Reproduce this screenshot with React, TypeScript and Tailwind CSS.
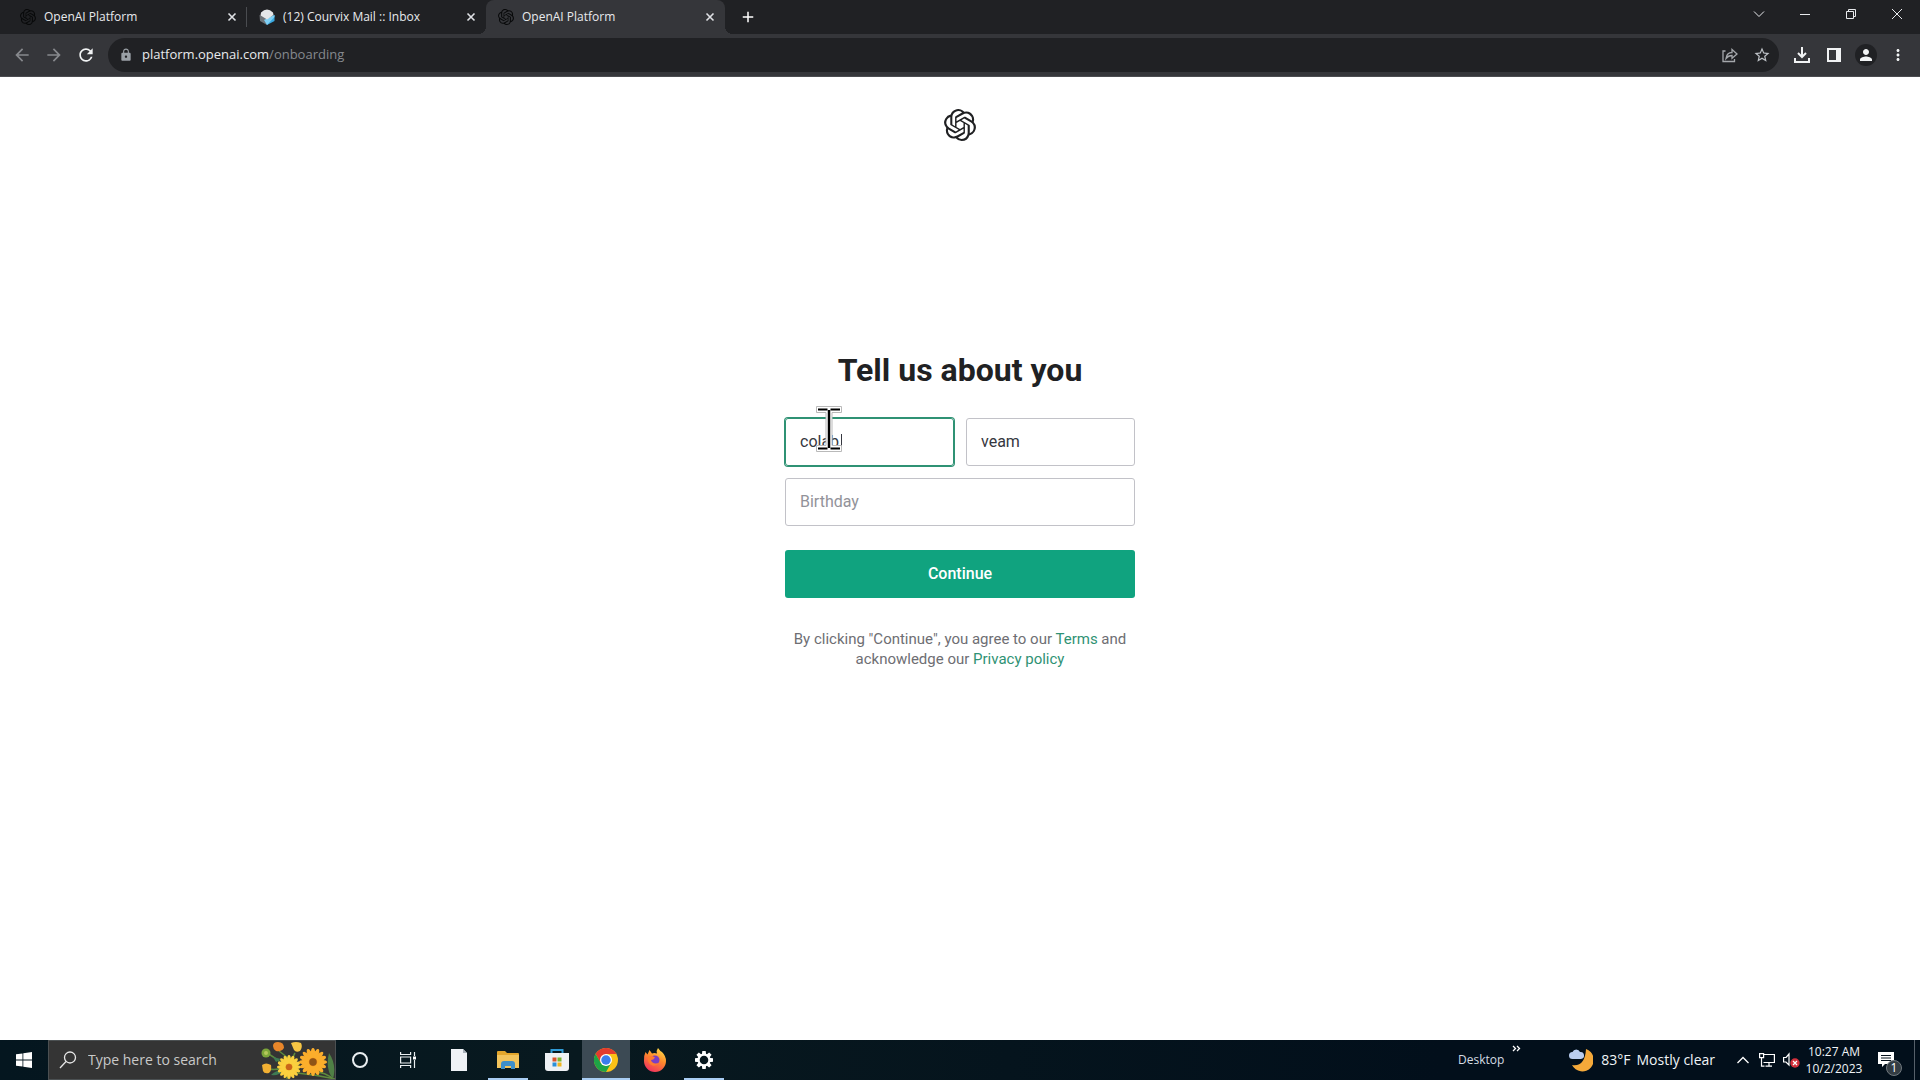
import React from "react";
import { SiOpenai } from "react-icons/si";
import { MdArrowBack, MdArrowForward, MdRefresh, MdLock, MdStarBorder, MdMoreVert, MdPerson, MdAdd } from "react-icons/md";

const ui = "font-['Open_Sans','Noto_Sans',sans-serif]";

function CloseGlyph() {
  return (
    <svg viewBox="0 0 16 16" className="size-4" fill="none" stroke="currentColor" strokeWidth="1.6">
      <path d="M4.5 4.5l7 7M11.500 4.500l-7 7" />
    </svg>
  );
}

function MailIcon() {
  return (
    <svg viewBox="0 0 16 16" className="size-4 shrink-0">
      <path d="M0.500 6L8 10v6L1 12z" fill="#6d7378" />
      <path d="M8 10l7.500-4v6L8 16z" fill="#3aa9e0" />
      <path d="M8 16l-3-5 3-1.500L15.500 6v2z" fill="#7fd0f5" />
      <path d="M2 3.500Q8-2.500 14 3.500L14.500 6 8 10.500 1.500 6.500z" fill="#e4e6e8" />
    </svg>
  );
}

type TabProps = { title: string; icon: React.ReactNode; active?: boolean; divider?: boolean };

function Tab({ title, icon, active, divider }: TabProps) {
  return (
    <div
      className={
        active
          ? "relative flex h-full w-[239px] items-center gap-2 rounded-t-lg bg-[#35363a] pr-[7px] pl-3 before:absolute before:right-full before:bottom-0 before:size-2 before:bg-[radial-gradient(circle_at_top_left,transparent_8px,#35363a_8px)] after:absolute after:bottom-0 after:left-full after:size-2 after:bg-[radial-gradient(circle_at_top_right,transparent_8px,#35363a_8px)]"
          : "relative flex h-full w-[239px] items-center gap-2 pr-[7px] pl-3"
      }
    >
      {icon}
      <button className="min-w-0 flex-1 truncate text-left text-xs text-[#e8eaed]">{title}</button>
      <button aria-label="Close tab" className="text-[#dfe1e5]">
        <CloseGlyph />
      </button>
      {divider && <span className="absolute top-[7px] right-0 h-5 w-px bg-[#4a4c50]" />}
    </div>
  );
}

function WindowButton({ label, children }: { label: string; children: React.ReactNode }) {
  return (
    <button aria-label={label} className="grid h-7 w-[46px] place-items-center">
      <svg viewBox="0 0 12 12" className="size-3" fill="none" stroke="#e8eaed" strokeWidth="1">
        {children}
      </svg>
    </button>
  );
}

function TabStrip() {
  const dark = <SiOpenai className="size-4 shrink-0 text-[#08090a]" />;
  return (
    <header className="flex h-[34px] shrink-0 bg-[#202124] pl-2">
      <Tab title="OpenAI Platform" icon={dark} divider />
      <Tab title="(12) Courvix Mail :: Inbox" icon={<MailIcon />} />
      <Tab title="OpenAI Platform" icon={dark} active />
      <button aria-label="New tab" className="ml-3 grid size-[22px] self-center place-items-center text-white">
        <MdAdd className="size-[18px]" />
      </button>
      <div className="ml-auto flex">
        <WindowButton label="Search tabs">
          <path d="M1 3.500l5 5 5-5" />
        </WindowButton>
        <WindowButton label="Minimize">
          <path d="M1 6.500h10" />
        </WindowButton>
        <WindowButton label="Restore">
          <path d="M1.500 3.500h7v7h-7zM3.500 3.500v-2h7v7h-2" />
        </WindowButton>
        <WindowButton label="Close">
          <path d="M1 1l10 10M11 1L1 11" />
        </WindowButton>
      </div>
    </header>
  );
}

function ToolButton({ label, children, className }: { label: string; children: React.ReactNode; className?: string }) {
  return (
    <button aria-label={label} className={"grid size-8 place-items-center " + (className ?? "")}>
      {children}
    </button>
  );
}

function Toolbar() {
  return (
    <nav className="flex h-[43px] shrink-0 items-center border-b border-[#4b4c50] bg-[#35363a] pr-1.5 pl-1.5">
      <ToolButton label="Back" className="text-[#87898d]">
        <MdArrowBack className="size-5" />
      </ToolButton>
      <ToolButton label="Forward" className="text-[#87898d]">
        <MdArrowForward className="size-5" />
      </ToolButton>
      <ToolButton label="Reload" className="text-[#f1f3f4]">
        <MdRefresh className="size-5" />
      </ToolButton>
      <div className="mr-[7px] ml-1.5 flex h-[34px] flex-1 items-center rounded-full bg-[#202124] pr-px pl-[11px]">
        <MdLock className="size-3.5 text-[#9aa0a6]" />
        <a href="#address" className="ml-[9px] flex-1 text-[13px] text-[#e8eaed]">
          platform.openai.com<span className="text-[#85898e]">/onboarding</span>
        </a>
        <ToolButton label="Share" className="text-[#a4a7ab]">
          <svg viewBox="0 0 16 16" className="size-4" fill="none" stroke="currentColor" strokeWidth="1.300">
            <path d="M3.500 4H1v10.500h11.500V12" />
            <path d="M4 11.500C4.500 7.500 7 5.500 10 5.500V2.500l5 4.500-5 4.300V8.500C7.500 8.500 5.500 9.500 4 11.500z" />
          </svg>
        </ToolButton>
        <ToolButton label="Bookmark" className="text-[#bdc1c6]">
          <MdStarBorder className="size-[18px]" />
        </ToolButton>
      </div>
      <ToolButton label="Downloads">
        <svg viewBox="0 0 16 16" className="size-4" fill="none" stroke="#f1f3f4" strokeWidth="2">
          <path d="M8 0v9.500M4 6l4 4 4-4M1 11v4h14v-4" />
        </svg>
      </ToolButton>
      <ToolButton label="Side panel">
        <svg viewBox="0 0 14 14" className="size-3.5">
          <path fillRule="evenodd" d="M0 0h14v14H0zM2 2v10h7V2z" fill="#f1f3f4" />
        </svg>
      </ToolButton>
      <ToolButton label="Profile">
        <span className="grid size-[22px] place-items-center rounded-full bg-[#202124] text-[#f1f3f4]">
          <MdPerson className="size-[18px]" />
        </span>
      </ToolButton>
      <ToolButton label="Menu" className="text-[#f1f3f4]">
        <MdMoreVert className="size-[18px]" />
      </ToolButton>
    </nav>
  );
}

function TextCursor() {
  return (
    <svg viewBox="0 0 26 46" className="pointer-events-none absolute -top-3 left-[31px] h-[46px] w-[26px]">
      <path d="M.5.500h25v6H16v33h9.500v6H.5v-6H10v-33H.5z" fill="#fff" stroke="#b9b9b9" />
      <path d="M2 3.500h9.500M14.500 3.500H24M2 42.500h9.500M14.500 42.500H24" stroke="#000" strokeWidth="2" />
      <path d="M13 4v38" stroke="#000" strokeWidth="2.500" />
    </svg>
  );
}

function Onboarding() {
  return (
    <main className="flex flex-1 flex-col items-center bg-white font-[Roboto,sans-serif]">
      <SiOpenai className="mt-8 size-8 text-[#202123]" aria-label="OpenAI" />
      <form className="mt-[209px] flex w-[350px] flex-col" onSubmit={(e) => e.preventDefault()}>
        <h1 className="text-center text-[32px] leading-10 font-bold whitespace-nowrap text-[#202123]">Tell us about you</h1>
        <div className="mt-7 grid grid-cols-2 gap-3">
          <div className="relative">
            <input
              aria-label="First name"
              defaultValue="colab"
              className="h-12 w-full rounded-[3px] border border-[#2f9274] px-3.5 pb-0.5 text-base text-[#353740] ring-1 ring-[#2f9274] outline-none"
            />
            <span className="absolute top-4 left-14 h-4 w-px bg-[#353740]" />
            <TextCursor />
          </div>
          <input
            aria-label="Last name"
            defaultValue="veam"
            className="h-12 w-full rounded-[3px] border border-[#c2c2c8] px-3.5 pb-0.5 text-base text-[#353740] outline-none"
          />
        </div>
        <input
          aria-label="Birthday"
          placeholder="Birthday"
          className="mt-3 h-12 rounded-[3px] border border-[#c2c2c8] px-3.5 pb-0.5 text-base outline-none placeholder:text-[#929299]"
        />
        <button className="mt-6 h-12 rounded-[3px] bg-[#10a37f] text-base font-medium text-white">Continue</button>
        <p className="mt-[31px] text-center text-[15px] leading-5 text-[#6e6e73]">
          By clicking "Continue", you agree to our <a href="#terms" className="text-[#2f9274]">Terms</a> and
          <br />
          acknowledge our <a href="#privacy" className="text-[#2f9274]">Privacy policy</a>
        </p>
      </form>
    </main>
  );
}

type DaisyProps = { x: number; y: number; r: number; petal: string; shade: string; heart: string };

function Daisy({ x, y, r, petal, shade, heart }: DaisyProps) {
  return (
    <g transform={`translate(${x} ${y})`}>
      <circle r={r * 0.8} fill={shade} />
      {Array.from({ length: 16 }, (_, i) => (
        <ellipse key={i} cy={-r * 0.64} rx={r * 0.15} ry={r * 0.36} fill={petal} transform={`rotate(${i * 22.500})`} />
      ))}
      <circle r={r * 0.26} fill={heart} />
    </g>
  );
}

function Flowers() {
  return (
    <svg viewBox="0 0 74 38" className="h-[38px] w-[74px]" fill="none">
      <path d="M6 12Q16 18 20 22M18 10Q26 16 30 20M34 12Q28 22 26 38M8 28Q18 30 28 24M36 32Q56 34 74 38M52 30Q66 32 72 38" stroke="#5e8a3c" strokeWidth="1.500" />
      <path d="M68 12Q76 24 72 38Q64 28 68 12z" fill="#4f7f45" />
      <path d="M12 16l8 2-5 3zM10 34q6-6 12-4-4 5-12 4z" fill="#3e7a52" />
      <circle cx="5" cy="12" r="4.500" fill="#7da63a" />
      <circle cx="5" cy="12" r="2" fill="#b5c85a" />
      <path d="M12 5q0-4 5-4 6 0 6 6-3 4-8 3-3-2-3-5z" fill="#e8862a" />
      <path d="M30 2q5-2 10 0 2 4-1 8-4 2-6-1z" fill="#f6c544" />
      <path d="M1 24q4-3 9 0 1 5-2 8-5 1-6-2z" fill="#f2b033" />
      <Daisy x={28} y={26} r={12} petal="#fad03f" shade="#e89a1c" heart="#c9651a" />
      <Daisy x={52} y={21} r={14} petal="#fbae2c" shade="#e27d14" heart="#8f5416" />
    </svg>
  );
}

function Cell({ label, line, active, children }: { label: string; line?: boolean; active?: boolean; children: React.ReactNode }) {
  return (
    <button aria-label={label} className={"relative grid h-10 w-12 place-items-center " + (active ? "bg-[#3c4a54]" : "")}>
      {children}
      {line && <span className={"absolute bottom-0 h-0.5 bg-[#a9cdf3] " + (active ? "inset-x-0" : "inset-x-1")} />}
    </button>
  );
}

function Taskbar() {
  return (
    <footer className={"flex h-10 shrink-0 items-center bg-[linear-gradient(90deg,#04161f,#08191f_30%,#020f1b_75%)] text-white " + ui}>
      <Cell label="Start">
        <svg viewBox="0 0 16 16" className="size-4" fill="#fff">
          <path d="M0 2.300l6.500-.9v6.200H0zM7.300 1.300L16 0v7.600H7.300zM0 8.400h6.500v6.200L0 13.700zM7.300 8.400H16V16l-8.700-1.200z" />
        </svg>
      </Cell>
      <label className="flex h-10 w-[288px] items-center border border-[#4b5052] bg-[#343434] pl-2.5">
        <svg viewBox="0 0 18 18" className="size-[18px]" fill="none" stroke="#e6e6e6" strokeWidth="1.300">
          <circle cx="11" cy="6.500" r="5.500" />
          <path d="M7 10.500L1 17" />
        </svg>
        <input aria-label="Search" placeholder="Type here to search" className="ml-[11px] w-0 flex-1 text-sm outline-none placeholder:text-[#c9c9c9]" />
        <Flowers />
      </label>
      <Cell label="Cortana">
        <span className="size-4 rounded-full border-2 border-[#e9eef0]" />
      </Cell>
      <Cell label="Task view">
        <svg viewBox="0 0 16 16" className="size-4" fill="none" stroke="#e9eef0" strokeWidth="1.200">
          <path d="M.6 0v2.500h10V0M.6 16v-2.500h10V16M.6 5h10v6H.6zM14.500 0v4M14.500 8v8" />
          <path d="M13 4.500h3v3h-3z" fill="#fff" stroke="none" />
        </svg>
      </Cell>
      <div className="ml-[3px] flex gap-px">
        <Cell label="Document">
          <svg viewBox="0 0 16 22" className="h-[22px] w-4">
            <path d="M0 0h12l4 4v18H0z" fill="#eef2f6" />
            <path d="M12 0v4h4z" fill="#a7b1ba" />
          </svg>
        </Cell>
        <Cell label="File Explorer" line>
          <svg viewBox="0 0 22 18" className="h-[18px] w-[22px]">
            <path d="M0 1q0-1 1-1h7l2 2h11q1 0 1 1v14H0z" fill="#e3a62c" />
            <path d="M0 4h22v13H0z" fill="#f3c45c" />
            <path d="M4 18v-5q0-3 3-3h8q3 0 3 3v5h-4v-3H8v3z" fill="#3f8fc9" />
          </svg>
        </Cell>
        <Cell label="Microsoft Store">
          <svg viewBox="0 0 24 24" className="size-6">
            <path d="M6.500 6V2h11v4" fill="none" stroke="#2f9bd6" strokeWidth="2" />
            <path d="M0 5h24v15q0 3-3 3H3q-3 0-3-3z" fill="#eef1f4" />
            <path d="M7.500 9.500h4v4h-4z" fill="#d9532c" />
            <path d="M12.500 9.500h4v4h-4z" fill="#7bb32e" />
            <path d="M7.500 14.500h4v4h-4z" fill="#2b8fd8" />
            <path d="M12.500 14.500h4v4h-4z" fill="#efb41f" />
          </svg>
        </Cell>
        <Cell label="Chrome" line active>
          <svg viewBox="0 0 48 48" className="size-6">
            <circle cx="24" cy="24" r="24" fill="#fbc116" />
            <path d="M3.200 12A24 24 0 0 1 44.800 12H24L13.600 30z" fill="#e33b2e" />
            <path d="M3.200 12A24 24 0 0 0 24 48L34.400 30 24 36 13.600 30z" fill="#1ea446" />
            <circle cx="24" cy="24" r="12" fill="#fff" />
            <circle cx="24" cy="24" r="9.500" fill="#3b7ded" />
          </svg>
        </Cell>
        <Cell label="Firefox">
          <svg viewBox="0 0 24 24" className="size-6">
            <defs>
              <linearGradient id="fox" x1=".8" y1="0" x2=".3" y2="1">
                <stop offset="0" stopColor="#ffe04a" />
                <stop offset=".45" stopColor="#ff8a2b" />
                <stop offset="1" stopColor="#f0305f" />
              </linearGradient>
            </defs>
            <path d="M2.500 4l2 2.500L6.500 2l2.500 3.500q2-1 5 0Q13 2.500 15 0q2 3 4 4 4 4 4 9a11 11 0 0 1-22 0Q.5 8 2.500 4z" fill="url(#fox)" />
            <circle cx="12" cy="12" r="4.500" fill="#7a3fc4" />
            <path d="M5 9q3-2 7 .5-1.500 2.500-4 2.500 1 4.500 8 3-4 4.500-8.500 1.500-3.500-3-2.500-7.500z" fill="#ff7a30" />
          </svg>
        </Cell>
        <Cell label="Settings" line>
          <svg viewBox="-10 -10 20 20" className="size-5">
            {Array.from({ length: 8 }, (_, i) => (
              <path key={i} d="M-1.700-9h3.400l.5 4h-4.400z" fill="#fff" transform={`rotate(${i * 45})`} />
            ))}
            <circle r="5.400" fill="none" stroke="#fff" strokeWidth="2.200" />
          </svg>
        </Cell>
      </div>
      <div className="ml-auto flex h-full items-center">
        <button className="text-xs text-[#d5dde3]">Desktop</button>
        <button aria-label="More" className="ml-2 self-start pt-1">
          <svg viewBox="0 0 9 9" className="size-[9px]" fill="none" stroke="#fff" strokeWidth="1.300">
            <path d="M1 2l2.500 2.500L1 7M5 2l2.500 2.500L5 7" />
          </svg>
        </button>
        <button className="ml-12 flex items-center text-sm text-[#f0f4f7]">
          <svg viewBox="0 0 24 24" className="size-6">
            <path d="M17 1a11.500 11.500 0 1 1-14 16Q16 19 17 1z" fill="#f5a93a" />
            <path d="M3.500 11a3.500 3.500 0 0 1 0-7A4 4 0 0 1 11 4a3.500 3.500 0 0 1 1 7z" fill="#b9cdf0" />
          </svg>
          <span className="ml-2">83°F</span>
          <span className="ml-1.5">Mostly clear</span>
        </button>
        <button aria-label="Show hidden icons" className="ml-[22px]">
          <svg viewBox="0 0 12 12" className="size-3" fill="none" stroke="#fff" strokeWidth="1.300">
            <path d="M.5 9L6 3.500 11.500 9" />
          </svg>
        </button>
        <button aria-label="Network" className="ml-2.5">
          <svg viewBox="0 0 16 14" className="h-3.5 w-4" fill="none" stroke="#fff" strokeWidth="1.200">
            <path d="M5 1.500h10.400v8H4.500M10 9.500v3.500M6.500 13.200H13M2.500 5v8.200h3" />
            <path d="M.6.600h4v4h-4z" />
          </svg>
        </button>
        <button aria-label="Volume" className="ml-2">
          <svg viewBox="0 0 17 16" className="h-4 w-[17px]">
            <path d="M.6 5.500h2.500L6 2v11L3 10H.6z" fill="none" stroke="#fff" strokeWidth="1.200" />
            <circle cx="12" cy="11" r="4.700" fill="#d3303c" />
            <path d="M10 9l4 4M14 9l-4 4" stroke="#fff" strokeWidth="1.200" />
          </svg>
        </button>
        <button className="ml-1 w-[60px] text-center text-xs leading-[17px] text-[#f0f4f7]">
          10:27 AM
          <br />
          10/2/2023
        </button>
        <button aria-label="Notifications" className="relative ml-2.5 h-10 w-8">
          <svg viewBox="0 0 16 16" className="absolute top-3 left-1 size-4">
            <path d="M0 0h16v12H7l-3 3v-3H0z" fill="#fff" />
            <path d="M3 3.500h10M3 6h10M3 8.500h10" stroke="#06121d" />
          </svg>
          <span className="absolute top-5 left-3 grid size-4 place-items-center rounded-full border border-[#70787e] bg-[#333c43] text-xs leading-none">1</span>
        </button>
        <span className="ml-2 h-full w-1.5 border-l border-[#56606a]" />
      </div>
    </footer>
  );
}

export default function App() {
  return (
    <div className={"flex h-screen flex-col overflow-hidden " + ui}>
      <TabStrip />
      <Toolbar />
      <Onboarding />
      <Taskbar />
    </div>
  );
}
